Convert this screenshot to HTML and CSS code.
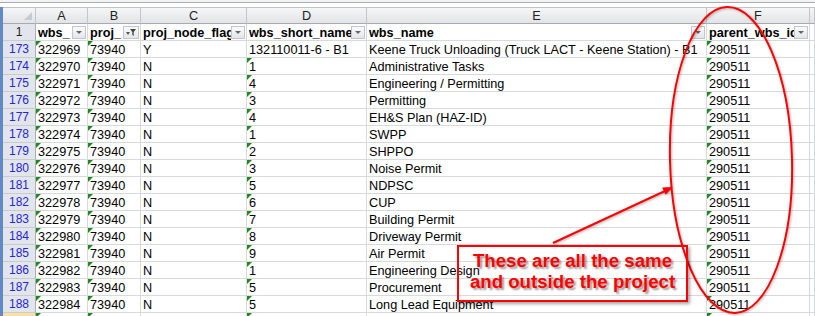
FILE: index.html
```html
<!DOCTYPE html>
<html lang="en">
<head>
  <meta charset="UTF-8">
  <title>WBS export</title>
  <link rel="stylesheet" href="styles.css">
</head>
<body>
  <div class="topbar"></div>
  <div class="sheet">
    <!-- column letters -->
    <div class="row colheads">
      <div class="corner"></div>
      <div class="ch">A</div>
      <div class="ch">B</div>
      <div class="ch">C</div>
      <div class="ch">D</div>
      <div class="ch">E</div>
      <div class="ch">F</div>
      <div class="ch"></div>
    </div>

    <!-- autofilter header -->
    <div class="row">
      <div class="rh plain">1</div>
      <div class="c hdr"><span>wbs_</span><i class="fb"></i></div>
      <div class="c hdr"><span>proj_</span><i class="fb on"><svg width="12" height="11" viewBox="0 0 12 11"><path d="M1 5h4l-2 3z" fill="#555"/><path d="M5 2h6l-2.3 3v4l-1.4-1v-3z" fill="#444"/></svg></i></div>
      <div class="c hdr"><span>proj_node_flag</span><i class="fb"></i></div>
      <div class="c hdr"><span>wbs_short_name</span><i class="fb"></i></div>
      <div class="c hdr"><span>wbs_name</span><i class="fb"></i></div>
      <div class="c hdr"><span>parent_wbs_id</span><i class="fb"></i></div>
      <div class="c"></div>
    </div>

    <div class="row"><div class="rh">173</div><div class="c t">322969</div><div class="c t">73940</div><div class="c">Y</div><div class="c">132110011-6 - B1</div><div class="c">Keene Truck Unloading (Truck LACT - Keene Station) - B1</div><div class="c t">290511</div><div class="c"></div></div>
    <div class="row"><div class="rh">174</div><div class="c t">322970</div><div class="c t">73940</div><div class="c">N</div><div class="c t">1</div><div class="c">Administrative Tasks</div><div class="c t">290511</div><div class="c"></div></div>
    <div class="row"><div class="rh">175</div><div class="c t">322971</div><div class="c t">73940</div><div class="c">N</div><div class="c t">4</div><div class="c">Engineering / Permitting</div><div class="c t">290511</div><div class="c"></div></div>
    <div class="row"><div class="rh">176</div><div class="c t">322972</div><div class="c t">73940</div><div class="c">N</div><div class="c t">3</div><div class="c">Permitting</div><div class="c t">290511</div><div class="c"></div></div>
    <div class="row"><div class="rh">177</div><div class="c t">322973</div><div class="c t">73940</div><div class="c">N</div><div class="c t">4</div><div class="c">EH&amp;S Plan (HAZ-ID)</div><div class="c t">290511</div><div class="c"></div></div>
    <div class="row"><div class="rh">178</div><div class="c t">322974</div><div class="c t">73940</div><div class="c">N</div><div class="c t">1</div><div class="c">SWPP</div><div class="c t">290511</div><div class="c"></div></div>
    <div class="row"><div class="rh">179</div><div class="c t">322975</div><div class="c t">73940</div><div class="c">N</div><div class="c t">2</div><div class="c">SHPPO</div><div class="c t">290511</div><div class="c"></div></div>
    <div class="row"><div class="rh">180</div><div class="c t">322976</div><div class="c t">73940</div><div class="c">N</div><div class="c t">3</div><div class="c">Noise Permit</div><div class="c t">290511</div><div class="c"></div></div>
    <div class="row"><div class="rh">181</div><div class="c t">322977</div><div class="c t">73940</div><div class="c">N</div><div class="c t">5</div><div class="c">NDPSC</div><div class="c t">290511</div><div class="c"></div></div>
    <div class="row"><div class="rh">182</div><div class="c t">322978</div><div class="c t">73940</div><div class="c">N</div><div class="c t">6</div><div class="c">CUP</div><div class="c t">290511</div><div class="c"></div></div>
    <div class="row"><div class="rh">183</div><div class="c t">322979</div><div class="c t">73940</div><div class="c">N</div><div class="c t">7</div><div class="c">Building Permit</div><div class="c t">290511</div><div class="c"></div></div>
    <div class="row"><div class="rh">184</div><div class="c t">322980</div><div class="c t">73940</div><div class="c">N</div><div class="c t">8</div><div class="c">Driveway Permit</div><div class="c t">290511</div><div class="c"></div></div>
    <div class="row"><div class="rh">185</div><div class="c t">322981</div><div class="c t">73940</div><div class="c">N</div><div class="c t">9</div><div class="c">Air Permit</div><div class="c t">290511</div><div class="c"></div></div>
    <div class="row"><div class="rh">186</div><div class="c t">322982</div><div class="c t">73940</div><div class="c">N</div><div class="c t">1</div><div class="c">Engineering Design</div><div class="c t">290511</div><div class="c"></div></div>
    <div class="row"><div class="rh">187</div><div class="c t">322983</div><div class="c t">73940</div><div class="c">N</div><div class="c t">5</div><div class="c">Procurement</div><div class="c t">290511</div><div class="c"></div></div>
    <div class="row"><div class="rh">188</div><div class="c t">322984</div><div class="c t">73940</div><div class="c">N</div><div class="c t">5</div><div class="c">Long Lead Equipment</div><div class="c t">290511</div><div class="c"></div></div>
    <div class="row"><div class="rh active"></div><div class="c t"></div><div class="c t"></div><div class="c"></div><div class="c t"></div><div class="c"></div><div class="c t"></div><div class="c"></div></div>
  </div>

  <!-- red callout drawn on top of the sheet -->
  <svg class="marks" width="815" height="316" viewBox="0 0 815 316">
    <ellipse cx="731" cy="160" rx="61" ry="153" fill="none" stroke="#f00" stroke-width="2" transform="rotate(-1.5 731 160)"/>
    <line x1="553" y1="243" x2="665" y2="191" stroke="#f00" stroke-width="2"/>
    <polygon points="673,187 665.6,194.8 662.2,187.6" fill="#f00"/>
  </svg>
  <div class="note">These are all the same<br>and outside the project</div>
</body>
</html>
```

FILE: styles.css
```css
body {
  margin: 0;
  width: 815px;
  height: 316px;
  overflow: hidden;
  background: #fff;
  font-family: "Liberation Sans", Arial, sans-serif;
  font-size: 12.7px;
  color: #000;
  position: relative;
}
.topbar {
  height: 7px;
  box-sizing: border-box;
  background: #fff;
  border-top: 2px solid #f3f3f3;
  box-shadow: inset 0 1px 0 #a9acb1;
}
.sheet {
  border-left: 3px solid #6288c8;
}
.row {
  display: grid;
  grid-template-columns: 33px 52px 53px 106px 120px 340px 103px 1fr;
  height: 17px;
}
.row > div {
  box-sizing: border-box;
  height: 17px;
  border-right: 1px solid #d6d9de;
  border-bottom: 1px solid #d6d9de;
}
.colheads > div {
  background: linear-gradient(#f5f6f7, #e1e3e6);
  border-top: 1px solid #bfc3c8;
  border-right-color: #c3c6cb;
  border-bottom-color: #a7abb1;
  text-align: center;
  line-height: 16px;
  color: #222;
}
.colheads > .corner {
  position: relative;
}
.corner::after {
  content: "";
  position: absolute;
  right: 3px;
  bottom: 3px;
  border-left: 8px solid transparent;
  border-bottom: 8px solid #c7cacf;
}
.rh {
  background: #e2e5eb;
  color: #2525d8;
  font-size: 12px;
  text-align: center;
  line-height: 17px;
  border-right-color: #a9adb4 !important;
  border-bottom-color: #c8ccd2 !important;
}
.rh.plain {
  color: #222;
}
.rh.active {
  background: linear-gradient(#fbe3aa, #f5c66d);
}
.c {
  position: relative;
  padding: 1px 2px 0;
  line-height: 17px;
  white-space: nowrap;
  overflow-x: clip;
}
.c.t::before {
  content: "";
  position: absolute;
  left: 0;
  top: 0;
  border-top: 5px solid #1d8a1d;
  border-right: 5px solid transparent;
}
.hdr {
  display: flex;
  align-items: center;
  padding: 0 1px 0 2px;
  font-weight: bold;
}
.hdr span {
  flex: 1;
  overflow: hidden;
  line-height: 16px;
  padding-top: 1px;
}
.fb {
  flex: none;
  width: 14px;
  height: 13px;
  box-sizing: border-box;
  border: 1px solid #c2c5ca;
  background: linear-gradient(#fbfbfb, #e3e5e8);
  display: flex;
  align-items: center;
  justify-content: center;
}
.fb::after {
  content: "";
  border-left: 3px solid transparent;
  border-right: 3px solid transparent;
  border-top: 3px solid #666;
  margin-top: 1px;
}
.fb.on {
  width: 16px;
}
.fb.on::after {
  display: none;
}
.marks {
  position: absolute;
  left: 0;
  top: 0;
  pointer-events: none;
  filter: drop-shadow(1px 1px 1px rgba(0, 0, 0, 0.3));
}
.note {
  position: absolute;
  left: 457px;
  top: 245px;
  width: 231px;
  height: 57px;
  box-sizing: border-box;
  border: 2px solid #f00;
  box-shadow: 2px 2px 3px rgba(0, 0, 0, 0.35);
  padding-top: 3px;
  text-align: center;
  font-family: "Liberation Sans", Arial, sans-serif;
  font-weight: bold;
  font-size: 18.67px;
  line-height: 21px;
  color: #f00;
  text-shadow: 2px 2px 2px rgba(0, 0, 0, 0.4);
}
```
